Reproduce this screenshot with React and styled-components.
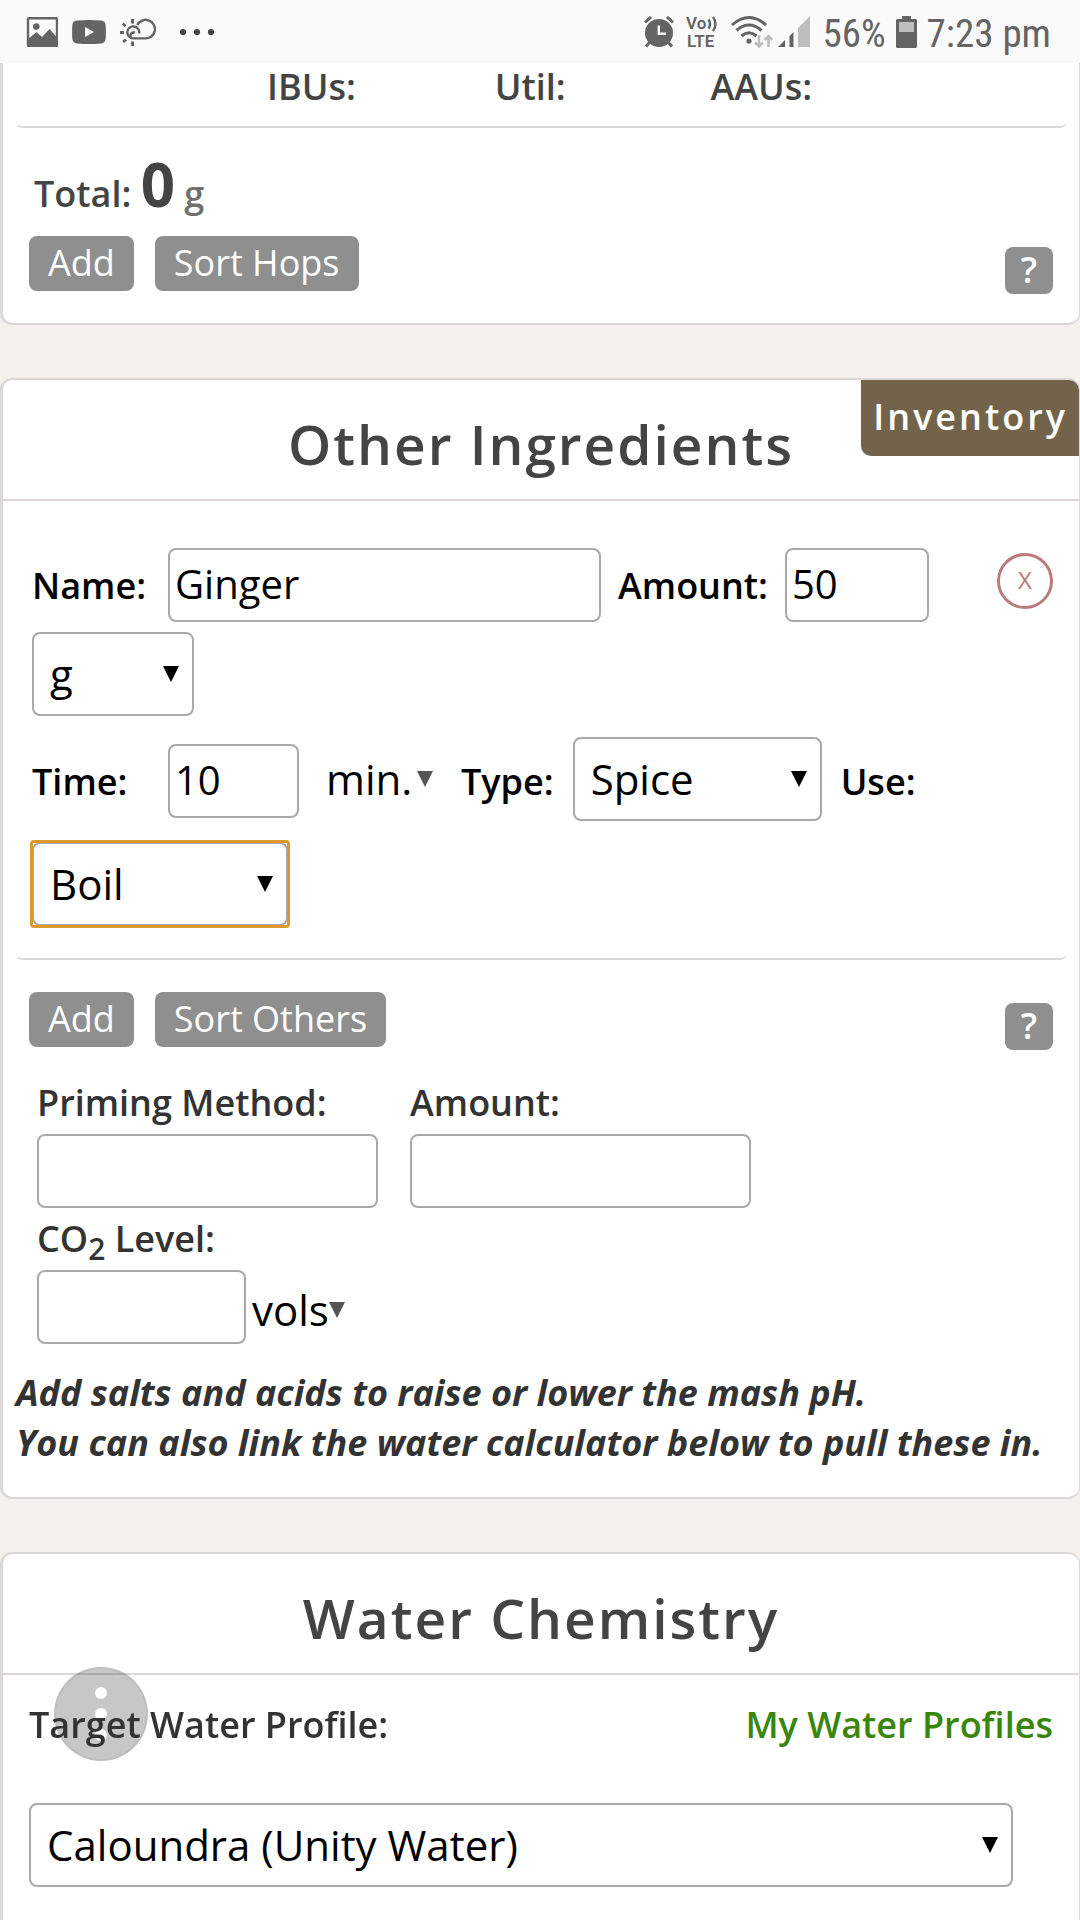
import React, { useState } from "react";
import styled, { createGlobalStyle } from "styled-components";

const units = ["g", "kg", "oz", "lb"];
const times = ["min.", "hours", "days"];
const types = ["Spice", "Fining", "Herb", "Flavor", "Other"];
const uses = ["Boil", "Mash", "Primary", "Secondary", "Bottling"];
const profiles = ["Caloundra (Unity Water)", "Burton on Trent", "Pilsen"];

const Select = ({ options, width, ghost, focused, ...rest }) => (
  <SelectWrapper $width={width} $ghost={ghost} $focused={focused}>
    <select {...rest}>
      {options.map((option) => (
        <option key={option}>{option}</option>
      ))}
    </select>
    <svg width="16" height="16" viewBox="0 0 16 16" aria-hidden="true">
      <path d="M0 0h16L8 16z" fill="currentColor" />
    </svg>
  </SelectWrapper>
);

const StatusBar = () => (
  <StatusWrapper>
    <StatusGroup $gap={14}>
      <svg width="32" height="30" viewBox="0 0 32 30">
        <rect x="2" y="1.2" width="29" height="28" rx="1" fill="none" stroke="#646464" strokeWidth="2.4" />
        <circle cx="10.3" cy="9.5" r="3.3" fill="#646464" />
        <path d="M2 22l8.500-7 5.500 5 7.500-8L31 20.500V29H2z" fill="#646464" />
      </svg>
      <svg width="34" height="24" viewBox="0 0 34 24">
        <path d="M5 .6Q17-.4 29 .6q4.400.4 4.600 4.400.6 7 0 14-.2 4-4.600 4.400-12 1-24 0-4.400-.4-4.600-4.400-.6-7 0-14Q.6 1 5 .6z" fill="#646464" />
        <path d="M13 7l9 5-9 5z" fill="#fafafa" />
      </svg>
      <svg width="36" height="28" viewBox="0 0 36 28">
        <g fill="none" stroke="#646464" strokeWidth="2.4">
          <path d="M17.300 7A9.300 9.300 0 1 1 25 20.400H13.600A6 6 0 1 1 19.200 15.400" />
          <path d="M10.500 19c-.6-3 1.500-5.200 4.500-4.400" />
        </g>
        <g fill="#646464">
          <path d="M11 1h3v4.500h-3zM11 23.500h3V28h-3zM0 13h4v3H0zM3.600 4.600l3 2.600-2 2-2.600-2.800zM5 20.400l2 2-3 2.600-1.800-2z" />
        </g>
      </svg>
      <svg width="48" height="8" viewBox="0 0 48 8" fill="#444">
        <circle cx="13" cy="4" r="3.100" />
        <circle cx="27" cy="4" r="3.100" />
        <circle cx="41" cy="4" r="3.100" />
      </svg>
    </StatusGroup>
    <StatusGroup $gap={12}>
      <svg width="30" height="32" viewBox="0 0 30 32">
        <circle cx="15" cy="17" r="14" fill="#646464" />
        <path d="M1 6.500l6-5.500M29 6.500L23 1M6 26l-4 4.500M24 26l4 4.500" stroke="#646464" strokeWidth="3" />
        <path d="M14.800 9.500v8.300h7" fill="none" stroke="#fafafa" strokeWidth="2.4" />
      </svg>
      <svg width="32" height="44" viewBox="0 -6 32 44">
        <g fill="#646464" fontFamily="Roboto, sans-serif" fontWeight="600" fontSize="17">
          <text x="0" y="13">Vo</text>
          <text x="1" y="31">LTE</text>
        </g>
        <path d="M22.500 3.500q3 4.500 0 9M27 1q5 7 0 14" fill="none" stroke="#646464" strokeWidth="2.400" />
      </svg>
      <StatusGroup $gap={4}>
        <svg width="44" height="34" viewBox="0 0 44 34">
          <g fill="none" stroke="#646464" strokeWidth="3">
            <path d="M2 10q17-15 34 0" />
            <path d="M6.500 15.500q12.500-11 25 0" />
            <path d="M11.500 21q7.500-6.500 15 0" />
          </g>
          <circle cx="19" cy="26" r="2.600" fill="#646464" />
          <path d="M29 20v11M25 27.500l4 4 4-4M38.500 32V20.500M34.500 25l4-4 4 4" fill="none" stroke="#bebebe" strokeWidth="2.600" />
        </svg>
        <svg width="32" height="32" viewBox="0 0 32 32">
          <path d="M0 31l7-7v7zM11.500 20l4-4v15h-4z" fill="#646464" />
          <path d="M20 12L32 0v31H20z" fill="#bebebe" />
        </svg>
      </StatusGroup>
      <StatusGroup $gap={10}>
        <span>56%</span>
        <svg width="21" height="32" viewBox="0 0 21 32">
          <path d="M6 0h9v3h4.500Q21 3 21 4.500v26q0 1.500-1.500 1.500h-18Q0 32 0 30.500v-26Q0 3 1.500 3H6z" fill="#646464" />
          <path d="M3 6h15v10H3z" fill="#bebebe" />
        </svg>
        <span>7:23 pm</span>
      </StatusGroup>
    </StatusGroup>
  </StatusWrapper>
);

const App = () => {
  const [item, setItem] = useState({
    name: "Ginger",
    amount: "50",
    unit: "g",
    time: "10",
    timeUnit: "min.",
    type: "Spice",
    use: "Boil",
  });
  const [priming, setPriming] = useState({ method: "", amount: "", co2: "" });

  const bind = (key) => ({
    id: key,
    value: item[key],
    onChange: (e) => setItem({ ...item, [key]: e.target.value }),
  });

  const bindPriming = (key) => ({
    id: `priming-${key}`,
    value: priming[key],
    onChange: (e) => setPriming({ ...priming, [key]: e.target.value }),
  });

  return (
    <Page>
      <GlobalStyle />
      <StatusBar />

      <Card $openTop>
        <HopStats>
          <span>IBUs:</span>
          <span>Util:</span>
          <span>AAUs:</span>
        </HopStats>
        <Total>
          Total: <b>0</b> <small>g</small>
        </Total>
        <Actions>
          <Button>Add</Button>
          <Button>Sort Hops</Button>
          <HelpButton aria-label="Help with hops">?</HelpButton>
        </Actions>
      </Card>

      <Card>
        <CardHeader>
          <Title>Other Ingredients</Title>
          <InventoryButton>Inventory</InventoryButton>
        </CardHeader>
        <Ingredient>
          <Fields>
            <FieldRow $gap="10px 17px">
              <Label htmlFor="name" $width={119}>Name:</Label>
              <Input $width={433} {...bind("name")} />
              <Label htmlFor="amount">Amount:</Label>
              <Input $width={144} {...bind("amount")} />
              <Select options={units} width={162} aria-label="Unit" {...bind("unit")} />
            </FieldRow>
            <FieldRow $gap="21px 19px">
              <Label htmlFor="time" $width={117}>Time:</Label>
              <Input $width={131} {...bind("time")} />
              <TimeUnit>
                <Select ghost options={times} width={107} aria-label="Time unit" {...bind("timeUnit")} />
              </TimeUnit>
              <Label htmlFor="type">Type:</Label>
              <Select options={types} width={249} {...bind("type")} />
              <Label htmlFor="use">Use:</Label>
              <Select focused options={uses} width={256} {...bind("use")} />
            </FieldRow>
          </Fields>
          <RemoveButton aria-label="Remove Ginger">X</RemoveButton>
        </Ingredient>
        <Actions $spaced>
          <Button>Add</Button>
          <Button>Sort Others</Button>
          <HelpButton aria-label="Help with other ingredients">?</HelpButton>
        </Actions>
        <Priming>
          <PrimingField>
            <FormLabel htmlFor="priming-method">Priming Method:</FormLabel>
            <Input $width={341} {...bindPriming("method")} />
          </PrimingField>
          <PrimingField>
            <FormLabel htmlFor="priming-amount">Amount:</FormLabel>
            <Input $width={341} {...bindPriming("amount")} />
          </PrimingField>
          <PrimingField $wide>
            <FormLabel htmlFor="priming-co2">
              CO<sub>2</sub> Level:
            </FormLabel>
            <Carbonation>
              <Input $width={209} {...bindPriming("co2")} />
              <Select ghost options={["vols", "g/L"]} aria-label="Carbonation unit" />
            </Carbonation>
          </PrimingField>
        </Priming>
        <Note>
          Add salts and acids to raise or lower the mash pH.
          <br />
          You can also link the water calculator below to pull these in.
        </Note>
      </Card>

      <Card $openBottom>
        <CardHeader>
          <Title>Water Chemistry</Title>
        </CardHeader>
        <ProfileRow>
          <FormLabel htmlFor="profile">Target Water Profile:</FormLabel>
          <ProfileLink href="#profiles">My Water Profiles</ProfileLink>
        </ProfileRow>
        <ProfileSelect>
          <Select id="profile" options={profiles} />
        </ProfileSelect>
      </Card>

      <AssistButton aria-label="Assistant menu">
        <i />
        <i />
        <i />
      </AssistButton>
    </Page>
  );
};

export default App;

// Styled Components

const GlobalStyle = createGlobalStyle`
  * {
    box-sizing: border-box;
  }

  body {
    margin: 0;
    background-color: #f4f0eb;
    font-family: 'Open Sans', 'Noto Sans', sans-serif;
    font-size: 36px;
    line-height: 48px;
    color: #333;
  }

  button, input, select {
    font-family: inherit;
    margin: 0;
  }

  button {
    border: none;
    padding: 0;
    cursor: pointer;
  }
`;

const Page = styled.div`
  min-height: 100vh;
  display: flex;
  flex-direction: column;
`;

const StatusWrapper = styled.header`
  display: flex;
  justify-content: space-between;
  align-items: center;
  height: 63px;
  padding: 1px 29px 0 26px;
  background-color: #fafafa;
  color: #646464;
  font-family: 'Roboto Condensed', Roboto, sans-serif;
  font-size: 39px;
`;

const StatusGroup = styled.div`
  display: flex;
  align-items: center;
  gap: ${({ $gap }) => $gap}px;

  span {
    padding-top: 4px;
  }
`;

const Card = styled.section`
  background-color: white;
  border: 2px solid #dcd8d8;
  border-left-width: 3px;
  border-right-width: 1px;
  border-radius: 12px;
  padding-bottom: 29px;

  & + & {
    margin-top: 53px;
  }

  ${({ $openTop }) => $openTop && `
    border-top: none;
    border-top-left-radius: 0;
    border-top-right-radius: 0;
  `}

  ${({ $openBottom }) => $openBottom && `
    flex: 1;
    border-bottom: none;
    border-bottom-left-radius: 0;
    border-bottom-right-radius: 0;
  `}
`;

const HopStats = styled.div`
  display: grid;
  grid-template-columns: 57fr 54fr 89fr;
  padding: 0 0 15px 251px;
  margin: 0 13px;
  border-bottom: 2px solid #dcd8d8;
  border-radius: 6px;
  font-weight: 600;
  color: #444;
`;

const Total = styled.div`
  padding: 15px 31px 1px;
  line-height: 82px;
  font-weight: 600;
  color: #444;

  b {
    font-size: 60px;
    font-weight: 700;
  }

  small {
    font-size: 36px;
    color: #707070;
  }
`;

const Actions = styled.div`
  display: flex;
  align-items: flex-start;
  gap: 21px;
  padding: ${({ $spaced }) => ($spaced ? 32 : 0)}px 26px 0;
`;

const Button = styled.button`
  height: 55px;
  padding: 0 19px 2px;
  border-radius: 8px;
  background-color: #8f8f8f;
  color: white;
  font-size: 36px;
  line-height: 48px;
`;

const HelpButton = styled.button`
  width: 48px;
  height: 47px;
  margin: 11px 0 0 auto;
  padding-bottom: 2px;
  border-radius: 8px;
  background-color: #8f8f8f;
  color: white;
  font-size: 36px;
  font-weight: 600;
  line-height: 45px;
`;

const CardHeader = styled.header`
  display: grid;
  border-bottom: 2px solid #dcd8d8;

  & > * {
    grid-area: 1 / 1;
  }
`;

const Title = styled.h2`
  margin: 0;
  padding: 26px 0 18px;
  text-align: center;
  font-size: 55px;
  line-height: 75px;
  font-weight: 600;
  letter-spacing: 2px;
  color: #444;
`;

const InventoryButton = styled.button`
  justify-self: end;
  align-self: start;
  height: 76px;
  padding: 0 11px 4px 12px;
  border-radius: 0 10px 0 10px;
  background-color: #73634a;
  color: white;
  font-size: 36px;
  font-weight: 600;
  letter-spacing: 3px;
`;

const Ingredient = styled.div`
  display: flex;
  align-items: flex-start;
  margin: 0 13px;
  padding: 47px 13px 32px 16px;
  border-bottom: 2px solid #dcd8d8;
  border-radius: 6px;
`;

const Fields = styled.div`
  flex: 1;
  display: grid;
  gap: 21px;
`;

const FieldRow = styled.div`
  display: flex;
  flex-wrap: wrap;
  align-items: baseline;
  gap: ${({ $gap }) => $gap};
`;

const Label = styled.label`
  width: ${({ $width }) => ($width ? `${$width}px` : "auto")};
  font-weight: 600;
  color: black;
`;

const Input = styled.input`
  width: ${({ $width }) => $width}px;
  height: 74px;
  padding: 0 6px 4px 5px;
  border: 2px solid #a9a9a9;
  border-radius: 8px;
  background-color: white;
  color: black;
  font-size: 40px;
`;

const SelectWrapper = styled.div`
  display: inline-grid;
  align-items: center;
  width: ${({ $width, $ghost }) => ($width ? `${$width}px` : $ghost ? "auto" : "100%")};
  color: ${({ $ghost }) => ($ghost ? "#555" : "black")};
  border-radius: 2px;
  outline: ${({ $focused }) => ($focused ? "3px solid #d99a2b" : "none")};
  outline-offset: -1px;

  & > * {
    grid-area: 1 / 1;
  }

  select {
    appearance: none;
    width: 100%;
    height: ${({ $ghost }) => ($ghost ? 68 : 84)}px;
    padding: ${({ $ghost }) => ($ghost ? "0 16px 2px 0" : "0 32px 2px 16px")};
    border: ${({ $ghost }) => ($ghost ? "none" : "2px solid #a9a9a9")};
    border-radius: 8px;
    outline: none;
    background-color: white;
    color: black;
    font-size: 42px;
  }

  svg {
    justify-self: end;
    margin-right: ${({ $ghost }) => ($ghost ? 0 : 15)}px;
    pointer-events: none;
  }
`;

const TimeUnit = styled.div`
  display: flex;
  margin: 0 9px 0 8px;
`;

const RemoveButton = styled.button`
  width: 56px;
  height: 56px;
  margin-top: 5px;
  padding-bottom: 4px;
  border: 3px solid #b97c7c;
  border-radius: 50%;
  background-color: white;
  color: #b97c7c;
  font-size: 24px;
`;

const Priming = styled.div`
  display: grid;
  grid-template-columns: max-content 1fr;
  gap: 7px 32px;
  padding: 29px 34px 0;
`;

const PrimingField = styled.div`
  display: flex;
  flex-direction: column;
  align-items: flex-start;
  gap: 7px;
  grid-column: ${({ $wide }) => ($wide ? "1 / -1" : "auto")};
`;

const FormLabel = styled.label`
  position: relative;
  z-index: 1;
  font-weight: 600;

  sub {
    font-size: 30px;
    line-height: 0;
  }
`;

const Carbonation = styled.div`
  display: flex;
  align-items: flex-end;
  gap: 6px;
`;

const Note = styled.p`
  margin: 24px 13px 0;
  font-weight: 700;
  font-style: italic;
  line-height: 50px;
`;

const ProfileRow = styled.div`
  display: flex;
  justify-content: space-between;
  padding: 26px 26px 0;
`;

const ProfileLink = styled.a`
  color: #38860c;
  font-weight: 600;
  text-decoration: none;
`;

const ProfileSelect = styled.div`
  padding: 54px 66px 0 26px;
`;

const AssistButton = styled.button`
  position: fixed;
  left: 54px;
  bottom: 159px;
  display: flex;
  flex-direction: column;
  align-items: center;
  justify-content: center;
  gap: 9px;
  width: 94px;
  height: 94px;
  border: 2px solid rgba(0, 0, 0, 0.05);
  border-radius: 50%;
  background-color: rgba(0, 0, 0, 0.22);

  i {
    width: 12px;
    height: 12px;
    border-radius: 50%;
    background-color: white;
  }
`;
